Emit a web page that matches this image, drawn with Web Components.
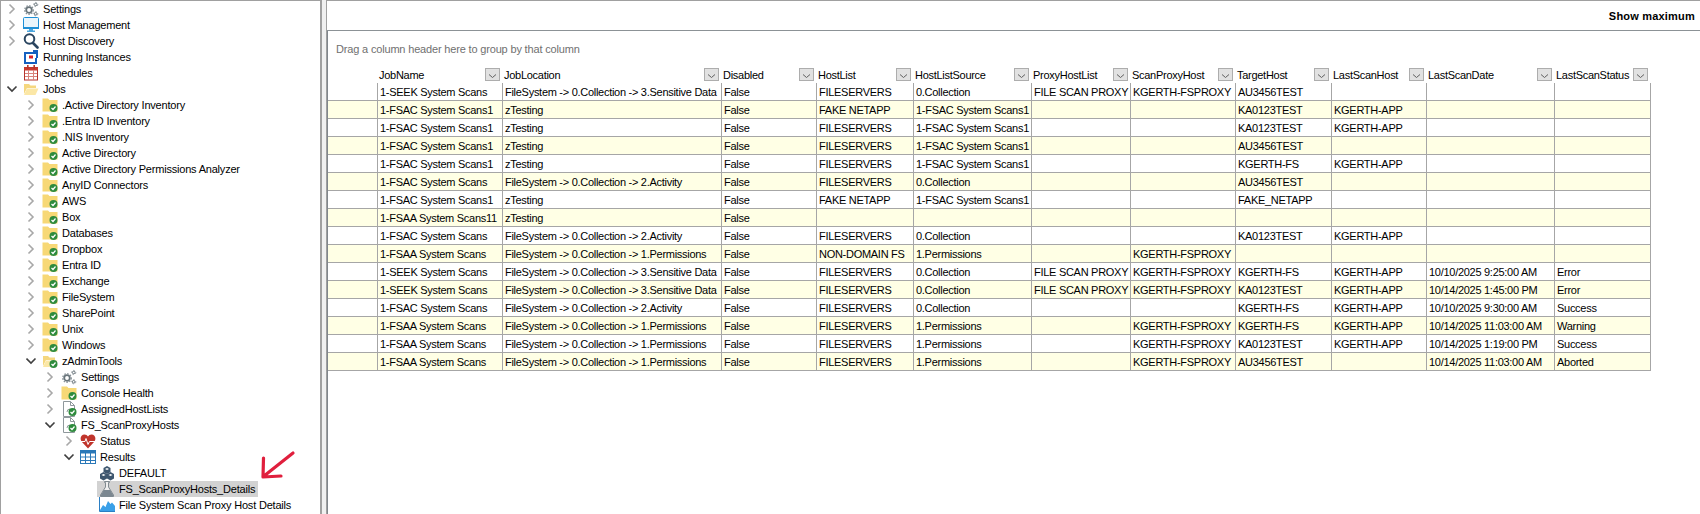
<!DOCTYPE html>
<html>
<head>
<meta charset="utf-8" />
<title>Scan proxy hosts</title>
<style>
  html, body { margin: 0; height: 100%; background: #fff; overflow: hidden; }
</style>
</head>
<body>
<app-shell>
  <job-tree slot="nav">
    <tree-row level="0" toggle="closed" icon="gears">Settings</tree-row>
    <tree-row level="0" toggle="closed" icon="monitor">Host Management</tree-row>
    <tree-row level="0" toggle="closed" icon="search">Host Discovery</tree-row>
    <tree-row level="0" icon="running">Running Instances</tree-row>
    <tree-row level="0" icon="calendar">Schedules</tree-row>
    <tree-row level="0" toggle="open" icon="folder-open">Jobs</tree-row>
    <tree-row level="1" toggle="closed" icon="folder">.Active Directory Inventory</tree-row>
    <tree-row level="1" toggle="closed" icon="folder">.Entra ID Inventory</tree-row>
    <tree-row level="1" toggle="closed" icon="folder">.NIS Inventory</tree-row>
    <tree-row level="1" toggle="closed" icon="folder">Active Directory</tree-row>
    <tree-row level="1" toggle="closed" icon="folder">Active Directory Permissions Analyzer</tree-row>
    <tree-row level="1" toggle="closed" icon="folder">AnyID Connectors</tree-row>
    <tree-row level="1" toggle="closed" icon="folder">AWS</tree-row>
    <tree-row level="1" toggle="closed" icon="folder">Box</tree-row>
    <tree-row level="1" toggle="closed" icon="folder">Databases</tree-row>
    <tree-row level="1" toggle="closed" icon="folder">Dropbox</tree-row>
    <tree-row level="1" toggle="closed" icon="folder">Entra ID</tree-row>
    <tree-row level="1" toggle="closed" icon="folder">Exchange</tree-row>
    <tree-row level="1" toggle="closed" icon="folder">FileSystem</tree-row>
    <tree-row level="1" toggle="closed" icon="folder">SharePoint</tree-row>
    <tree-row level="1" toggle="closed" icon="folder">Unix</tree-row>
    <tree-row level="1" toggle="closed" icon="folder">Windows</tree-row>
    <tree-row level="1" toggle="open" icon="folder-open-check">zAdminTools</tree-row>
    <tree-row level="2" toggle="closed" icon="gears">Settings</tree-row>
    <tree-row level="2" toggle="closed" icon="folder">Console Health</tree-row>
    <tree-row level="2" toggle="closed" icon="doc">AssignedHostLists</tree-row>
    <tree-row level="2" toggle="open" icon="doc">FS_ScanProxyHosts</tree-row>
    <tree-row level="3" toggle="closed" icon="heart">Status</tree-row>
    <tree-row level="3" toggle="open" icon="table">Results</tree-row>
    <tree-row level="4" icon="cubes">DEFAULT</tree-row>
    <tree-row level="4" icon="flask" selected>FS_ScanProxyHosts_Details</tree-row>
    <tree-row level="4" icon="chart">File System Scan Proxy Host Details</tree-row>
  </job-tree>
  <red-arrow slot="nav"></red-arrow>
  <report-toolbar slot="main">Show maximum</report-toolbar>
  <report-body slot="main">
    <group-hint>Drag a column header here to group by that column</group-hint>
    <data-grid></data-grid>
  </report-body>
</app-shell>

<script>
  // shared icon drawings for the tree, all on a 16x16 box
  const CHECK = `<circle cx="11.5" cy="11" r="4" fill="#2e8b3d"/><path d="M9.500 11l1.500 1.500 2.500-3" fill="none" stroke="#fff" stroke-width="1.200"/>`;
  const GEAR = (cx, cy, r, sw) => `<circle cx="${cx}" cy="${cy}" r="${r}" fill="none" stroke="#69757b" stroke-width="${sw}"/><circle cx="${cx}" cy="${cy}" r="${r + sw * 0.8}" fill="none" stroke="#8a9399" stroke-width="${sw * 0.8}" stroke-dasharray="1.500 1.300"/>`;
  const OPEN_FOLDER = `<path d="M1 13V3h5l1.500 1.500H13V7H4z" fill="#f5d77e"/><path d="M1 14l3-6.500h11.500L12.500 14z" fill="#fbe7a6"/>`;
  const ICONS = {
    gears: GEAR(6, 9, 2.8, 1.8) + GEAR(12.7, 3.5, 1.3, 1) + GEAR(12.7, 12.8, 1.3, 1),
    monitor: `<rect x="0.500" y="0.500" width="15" height="10.500" rx="1" fill="#eaf5fc" stroke="#1e8fd6"/><rect x="0" y="10" width="16" height="2" fill="#1e8fd6"/><path d="M6 12h4v1.500h2V15H4v-1.500h2z" fill="#4aa5de"/>`,
    search: `<circle cx="6.500" cy="6" r="4.800" fill="#fff" stroke="#2a4560" stroke-width="2"/><path d="M10 10l4.500 4.500" stroke="#2a4560" stroke-width="2.600" stroke-linecap="round"/>`,
    running: `<path d="M1 3h9V1h5v8h-2V5H3v8h8v2H1z" fill="#1560c0"/><path d="M14 9v6H3v-2h9V9z" fill="#1560c0"/><rect x="6" y="6.500" width="4" height="3" fill="#d8232a"/>`,
    calendar: `<rect x="1.500" y="2.500" width="13" height="12.500" fill="#fff" stroke="#b5352c"/><rect x="1" y="2.500" width="14" height="3" fill="#c8392e"/><path d="M2 8.500h12M2 11.500h12M5.500 5v10M10.500 5v10" stroke="#d9857d"/><rect x="4" y="0" width="1.600" height="4" fill="#b5352c"/><rect x="10.400" y="0" width="1.600" height="4" fill="#b5352c"/>`,
    "folder-open": OPEN_FOLDER,
    "folder-open-check": OPEN_FOLDER + CHECK,
    folder: `<path d="M0.500 14.500V1.500h5.500l1.500 1.500h8v11.500z" fill="#f7d876"/>` + CHECK,
    doc: `<path d="M2.500 0.500h7l4 4v11h-11z" fill="#fff" stroke="#8f989c"/><path d="M9.500 0.500v4h4" fill="none" stroke="#8f989c"/><path d="M6 11a3 3 0 0 1 3-3" fill="none" stroke="#8f989c"/>` + CHECK,
    heart: `<path d="M8 15.500L1.500 8.500C-0.500 5.500 1 1.500 4.500 1.500c1.500 0 2.700 0.700 3.500 2 0.800-1.300 2-2 3.500-2 3.500 0 5 4 3 7z" fill="#c0342b"/><path d="M0.500 8.500h4.500l1-3 2 6 1.500-3h6" fill="none" stroke="#fff" stroke-width="1"/>`,
    table: `<rect x="0.500" y="1.500" width="15" height="13" fill="#fff" stroke="#2a78b8"/><rect x="0.500" y="1.500" width="15" height="3" fill="#2a78b8"/><path d="M0.500 8h15M0.500 11.500h15M5.500 4v11M10.500 4v11" stroke="#2a78b8"/>`,
    cubes: `<path d="M8 1l3.500 2v4L8 9 4.500 7V3z" fill="#3e566e"/><path d="M4.500 7L8 9v4.500L4.500 15.500 1 13.500V9z" fill="#3e566e"/><path d="M11.500 7L15 9v4.500l-3.500 2L8 13.500V9z" fill="#3e566e"/><path d="M8 3l2 1-2 1-2-1zM4.500 9l2 1-2 1-2-1zM11.500 9l2 1-2 1-2-1z" fill="#fff"/>`,
    flask: `<path d="M5.500 0.500h5v1h-1v4.500l5 8v1.500H1.500V14l5-8V1.500h-1z" fill="#eee" stroke="#808a90"/><path d="M4.800 9h6.400l3 5v1.500H1.800V14z" fill="#7b8790"/>`,
    chart: `<path d="M1 13l3-5 2.500 2L9 4l2.500 3L13 5.500 16 9v5H1z" fill="#3aa0e8"/><path d="M0.500 0v14.500H16" fill="none" stroke="#2b7fc4"/>`
  };

  class AppShell extends HTMLElement {
    constructor() {
      super();
      this.attachShadow({ mode: "open" }).innerHTML = `
        <style>
          :host { display: flex; width: 1700px; height: 514px; font-family: "Liberation Sans", sans-serif; color: #000; background: #fff; }
          .nav { position: relative; width: 322px; flex: none; box-sizing: border-box; border-top: 1px solid #a0a0a0; border-left: 1px solid #a0a0a0; border-right: 2px solid #a0a0a0; overflow: hidden; }
          .split { width: 4px; flex: none; background: #f0f0f0; }
          .main { flex: 1; display: flex; flex-direction: column; box-sizing: border-box; border-top: 1px solid #a0a0a0; border-left: 1px solid #a0a0a0; min-width: 0; }
        </style>
        <div class="nav"><slot name="nav"></slot></div>
        <div class="split"></div>
        <div class="main"><slot name="main"></slot></div>`;
    }
  }

  class JobTree extends HTMLElement {
    constructor() {
      super();
      this.attachShadow({ mode: "open" }).innerHTML = `
        <style>:host { display: flex; flex-direction: column; }</style>
        <slot></slot>`;
    }
  }

  class TreeRow extends HTMLElement {
    connectedCallback() {
      const level = +this.getAttribute("level");
      const toggle = this.getAttribute("toggle");
      const chevron = toggle === "open"
        ? `<path d="M.5 3.500l4.500 4.500 4.500-4.500" fill="none" stroke="#404040" stroke-width="1.600"/>`
        : toggle === "closed"
        ? `<path d="M2.500 1.500l4.500 4.500-4.500 4.500" fill="none" stroke="#a8a8a8" stroke-width="1.600"/>`
        : "";
      this.attachShadow({ mode: "open" }).innerHTML = `
        <style>
          :host { display: block; height: 16px; padding-left: ${6 + level * 19}px; font-size: 11px; letter-spacing: -0.2px; }
          .row { display: flex; align-items: center; height: 16px; }
          .chev { width: 12px; height: 12px; flex: none; margin-right: 2px; }
          .hl { display: flex; align-items: center; height: 16px; padding-left: 2px; }
          :host([selected]) .hl { background: #d2d2d2; }
          .icon { width: 16px; height: 16px; flex: none; }
          .label { padding: 0 3px 0 4px; line-height: 16px; white-space: nowrap; }
        </style>
        <div class="row">
          <svg class="chev" viewBox="0 0 12 12">${chevron}</svg>
          <div class="hl">
            <svg class="icon" viewBox="0 0 16 16">${ICONS[this.getAttribute("icon")] || ""}</svg>
            <span class="label"><slot></slot></span>
          </div>
        </div>`;
    }
  }

  // hand drawn annotation that sits over the tree
  class RedArrow extends HTMLElement {
    constructor() {
      super();
      this.attachShadow({ mode: "open" }).innerHTML = `
        <style>:host { position: absolute; left: 259px; top: 449px; width: 36px; height: 32px; }</style>
        <svg width="36" height="32" viewBox="0 0 36 32">
          <path d="M33 3L4 26M3.500 8L3 27l18-1" fill="none" stroke="#e01f3d" stroke-width="3.200" stroke-linecap="round" stroke-linejoin="round"/>
        </svg>`;
    }
  }

  class ReportToolbar extends HTMLElement {
    constructor() {
      super();
      this.attachShadow({ mode: "open" }).innerHTML = `
        <style>
          :host { display: flex; flex: none; justify-content: flex-end; align-items: center; height: 29px; border-bottom: 1px solid #8c9296; padding-right: 5px; font: bold 11px "Liberation Sans", sans-serif; letter-spacing: 0.2px; }
        </style>
        <slot></slot>`;
    }
  }

  class ReportBody extends HTMLElement {
    constructor() {
      super();
      this.attachShadow({ mode: "open" }).innerHTML = `
        <style>:host { display: block; flex: 1; border-left: 1px solid #80868c; }</style>
        <slot></slot>`;
    }
  }

  class GroupHint extends HTMLElement {
    constructor() {
      super();
      this.attachShadow({ mode: "open" }).innerHTML = `
        <style>
          :host { display: block; height: 35px; line-height: 36px; padding-left: 8px; font-size: 11px; letter-spacing: -0.17px; color: #707070; }
        </style>
        <slot></slot>`;
    }
  }

  const COLUMNS = [
    ["JobName", 125], ["JobLocation", 219], ["Disabled", 95], ["HostList", 97], ["HostListSource", 118],
    ["ProxyHostList", 99], ["ScanProxyHost", 105], ["TargetHost", 96], ["LastScanHost", 95],
    ["LastScanDate", 128], ["LastScanStatus", 96]
  ];
  const SENS = "FileSystem -&gt; 0.Collection -&gt; 3.Sensitive Data";
  const ACT = "FileSystem -&gt; 0.Collection -&gt; 2.Activity";
  const PERM = "FileSystem -&gt; 0.Collection -&gt; 1.Permissions";
  const SEEK = "1-SEEK System Scans", FSAC = "1-FSAC System Scans", FSAC1 = "1-FSAC System Scans1", FSAA = "1-FSAA System Scans";
  const FS = "FILESERVERS", APP = "KGERTH-APP", PROXY = "KGERTH-FSPROXY", FSP = "FILE SCAN PROXY";
  const ROWS = [
    [SEEK, SENS, "False", FS, "0.Collection", FSP, PROXY, "AU3456TEST", "", "", ""],
    [FSAC1, "zTesting", "False", "FAKE NETAPP", FSAC1, "", "", "KA0123TEST", APP, "", ""],
    [FSAC1, "zTesting", "False", FS, FSAC1, "", "", "KA0123TEST", APP, "", ""],
    [FSAC1, "zTesting", "False", FS, FSAC1, "", "", "AU3456TEST", "", "", ""],
    [FSAC1, "zTesting", "False", FS, FSAC1, "", "", "KGERTH-FS", APP, "", ""],
    [FSAC, ACT, "False", FS, "0.Collection", "", "", "AU3456TEST", "", "", ""],
    [FSAC1, "zTesting", "False", "FAKE NETAPP", FSAC1, "", "", "FAKE_NETAPP", "", "", ""],
    ["1-FSAA System Scans11", "zTesting", "False", "", "", "", "", "", "", "", ""],
    [FSAC, ACT, "False", FS, "0.Collection", "", "", "KA0123TEST", APP, "", ""],
    [FSAA, PERM, "False", "NON-DOMAIN FS", "1.Permissions", "", PROXY, "", "", "", ""],
    [SEEK, SENS, "False", FS, "0.Collection", FSP, PROXY, "KGERTH-FS", APP, "10/10/2025 9:25:00 AM", "Error"],
    [SEEK, SENS, "False", FS, "0.Collection", FSP, PROXY, "KA0123TEST", APP, "10/14/2025 1:45:00 PM", "Error"],
    [FSAC, ACT, "False", FS, "0.Collection", "", "", "KGERTH-FS", APP, "10/10/2025 9:30:00 AM", "Success"],
    [FSAA, PERM, "False", FS, "1.Permissions", "", PROXY, "KGERTH-FS", APP, "10/14/2025 11:03:00 AM", "Warning"],
    [FSAA, PERM, "False", FS, "1.Permissions", "", PROXY, "KA0123TEST", APP, "10/14/2025 1:19:00 PM", "Success"],
    [FSAA, PERM, "False", FS, "1.Permissions", "", PROXY, "AU3456TEST", "", "10/14/2025 11:03:00 AM", "Aborted"]
  ];

  class DataGrid extends HTMLElement {
    constructor() {
      super();
      const cols = `49px ${COLUMNS.map((c) => c[1] + "px").join(" ")}`;
      const head = COLUMNS.map((c) => `<div class="th"><span>${c[0]}</span><svg class="btn" width="15" height="13" viewBox="0 0 15 13"><rect x=".5" y=".5" width="14" height="12" fill="#e1e1e1" stroke="#adadad"/><path d="M4 6.500l3.500 3 3.500-3" fill="none" stroke="#606060"/></svg></div>`).join("");
      const body = ROWS.map((r, i) => `<div class="row ${i % 2 ? "alt" : ""}"><div class="sel"></div>${r.map((v) => `<div class="td">${v}</div>`).join("")}</div>`).join("");
      this.attachShadow({ mode: "open" }).innerHTML = `
        <style>
          :host { display: block; width: 1323px; font-size: 11px; letter-spacing: -0.28px; }
          .head, .row { display: grid; grid-template-columns: ${cols}; }
          .head { height: 17px; }
          .th { display: flex; align-items: center; justify-content: space-between; padding: 0 2px 0 2px; white-space: nowrap; }
          .btn { flex: none; }
          .row { height: 18px; box-sizing: border-box; border-bottom: 1px solid #a6a6a6; border-right: 1px solid #a6a6a6; }
          .row.alt { background: #ffffe5; }
          .td { border-left: 1px solid #a6a6a6; padding-left: 2px; line-height: 18px; height: 17px; white-space: nowrap; overflow: hidden; }
        </style>
        <div class="head"><div></div>${head}</div>
        ${body}`;
    }
  }

  customElements.define("app-shell", AppShell);
  customElements.define("job-tree", JobTree);
  customElements.define("tree-row", TreeRow);
  customElements.define("red-arrow", RedArrow);
  customElements.define("report-toolbar", ReportToolbar);
  customElements.define("report-body", ReportBody);
  customElements.define("group-hint", GroupHint);
  customElements.define("data-grid", DataGrid);
</script>
</body>
</html>
